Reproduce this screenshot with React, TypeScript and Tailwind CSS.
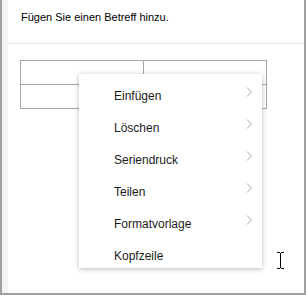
import { ReactNode } from "react"

const items: { label: string; sub: boolean }[] = [
  { label: "Einfügen", sub: true },
  { label: "Löschen", sub: true },
  { label: "Seriendruck", sub: true },
  { label: "Teilen", sub: true },
  { label: "Formatvorlage", sub: true },
  { label: "Kopfzeile", sub: false },
]

function Chevron() {
  return (
    <svg width="7" height="10" viewBox="0 0 7 10" className="absolute right-[9px] top-[7px]">
      <polyline points="1,0.5 5.5,5 1,9.5" fill="none" stroke="#a6a6a6" strokeWidth="1" />
    </svg>
  )
}

function MenuItem({ children, sub }: { children: ReactNode; sub: boolean }) {
  return (
    <div className="relative flex h-8 items-center pl-[35px] text-[12px] text-[#1b1b1b]">
      <span className="-mt-[1px]">{children}</span>
      {sub && <Chevron />}
    </div>
  )
}

export default function App() {
  return (
    <div
      className="relative h-[296px] w-[306px] overflow-hidden bg-white"
      style={{ fontFamily: '"Liberation Sans", Arial, sans-serif' }}
    >
      <div className="flex h-[295px] w-full border-b-2 border-l-2 border-r-2 border-[#a0a0a0]">
        <div className="w-[6px] shrink-0 bg-[#f2f2f2]" />
        <div className="flex flex-1 flex-col">
          <div className="flex h-[44px] items-center border-b border-[#e6e6e6] pb-[8px] pl-[13px] text-[11px] text-black">
            Fügen Sie einen Betreff hinzu.
          </div>
          <div className="pl-[12px] pt-[16px]">
            <div className="grid w-[247px] grid-cols-2 border-l border-t border-[#a6a6a6]">
              <div className="h-6 border-b border-r border-[#a6a6a6]" />
              <div className="h-6 border-b border-r border-[#a6a6a6]" />
              <div className="h-6 border-b border-r border-[#a6a6a6]" />
              <div className="h-6 border-b border-r border-[#a6a6a6]" />
            </div>
          </div>
        </div>
      </div>

      <div className="absolute left-[79px] top-[74px] h-[194px] w-[183px] overflow-hidden bg-white pt-[6px] shadow-[0_1px_5px_rgba(0,0,0,0.28)]">
        {items.map((it) => (
          <MenuItem key={it.label} sub={it.sub}>
            {it.label}
          </MenuItem>
        ))}
      </div>

      <svg width="7" height="17" viewBox="0 0 7 17" className="absolute left-[277px] top-[252px]">
        <path d="M0 0.5h3M4 0.5h3M3.5 1v15M0 16.5h3M4 16.5h3" stroke="#000" strokeWidth="1" fill="none" />
      </svg>
    </div>
  )
}
